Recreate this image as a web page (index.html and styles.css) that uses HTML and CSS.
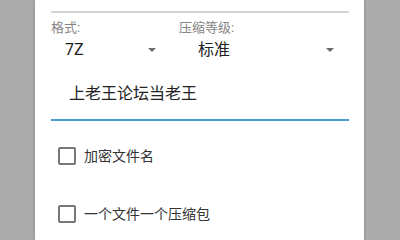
FILE: index.html
```html
<!DOCTYPE html>
<html>
<head>
<meta charset="utf-8">
<link rel="stylesheet" href="styles.css">
</head>
<body>
<div class="dialog">
  <div class="divider"></div>
  <div class="fields">
    <div class="field field-format">
      <div class="label">格式:</div>
      <div class="spinner">
        <span class="value latin">7Z</span>
        <span class="arrow"></span>
      </div>
    </div>
    <div class="field field-level">
      <div class="label">压缩等级:</div>
      <div class="spinner">
        <span class="value">标准</span>
        <span class="arrow"></span>
      </div>
    </div>
  </div>
  <div class="input">上老王论坛当老王</div>
  <div class="check first">
    <span class="box"></span>
    <span class="check-label">加密文件名</span>
  </div>
  <div class="check">
    <span class="box"></span>
    <span class="check-label">一个文件一个压缩包</span>
  </div>
</div>
</body>
</html>
```
FILE: styles.css
```css
html, body {
  margin: 0;
  padding: 0;
  background: #acacac;
  height: 100%;
  overflow: hidden;
  font-family: Roboto, "Noto Sans CJK SC", sans-serif;
}

.dialog {
  margin-left: 35px;
  width: 329px;
  min-height: 100vh;
  background: #ffffff;
  box-sizing: border-box;
  padding: 11px 15px 0 16px;
  box-shadow: 0 0 3px rgba(0, 0, 0, 0.25);
}

.divider {
  height: 2px;
  background: #d4d4d4;
}

.fields {
  display: flex;
  margin-top: 7px;
}

.field-format {
  width: 128px;
}

.field-level {
  flex: 1;
}

.label {
  font-size: 13px;
  line-height: 15px;
  color: #858585;
}

.spinner {
  display: flex;
  align-items: center;
  height: 20px;
  margin-top: 5px;
}

.field-format .spinner {
  padding-left: 14px;
  padding-right: 23px;
}

.field-level .spinner {
  padding-left: 19px;
  padding-right: 15px;
}

.value {
  flex: 1;
  font-size: 16px;
  line-height: 20px;
  color: #212121;
}

.arrow {
  width: 0;
  height: 0;
  border-left: 4px solid transparent;
  border-right: 4px solid transparent;
  border-top: 4px solid #6a6a6a;
}

.input {
  margin-top: 24px;
  padding-left: 18px;
  font-size: 16px;
  line-height: 20px;
  padding-bottom: 15px;
  color: #212121;
  border-bottom: 2px solid #4a9bd4;
}

.check {
  display: flex;
  align-items: center;
  height: 18px;
  margin-top: 40px;
  padding-left: 7px;
}

.check.first {
  margin-top: 26px;
}

.box {
  width: 18px;
  height: 18px;
  box-sizing: border-box;
  border: 2px solid #777777;
  border-radius: 2px;
}

.check-label {
  margin-left: 8px;
  font-size: 14px;
  line-height: 18px;
  color: #333333;
}
```
